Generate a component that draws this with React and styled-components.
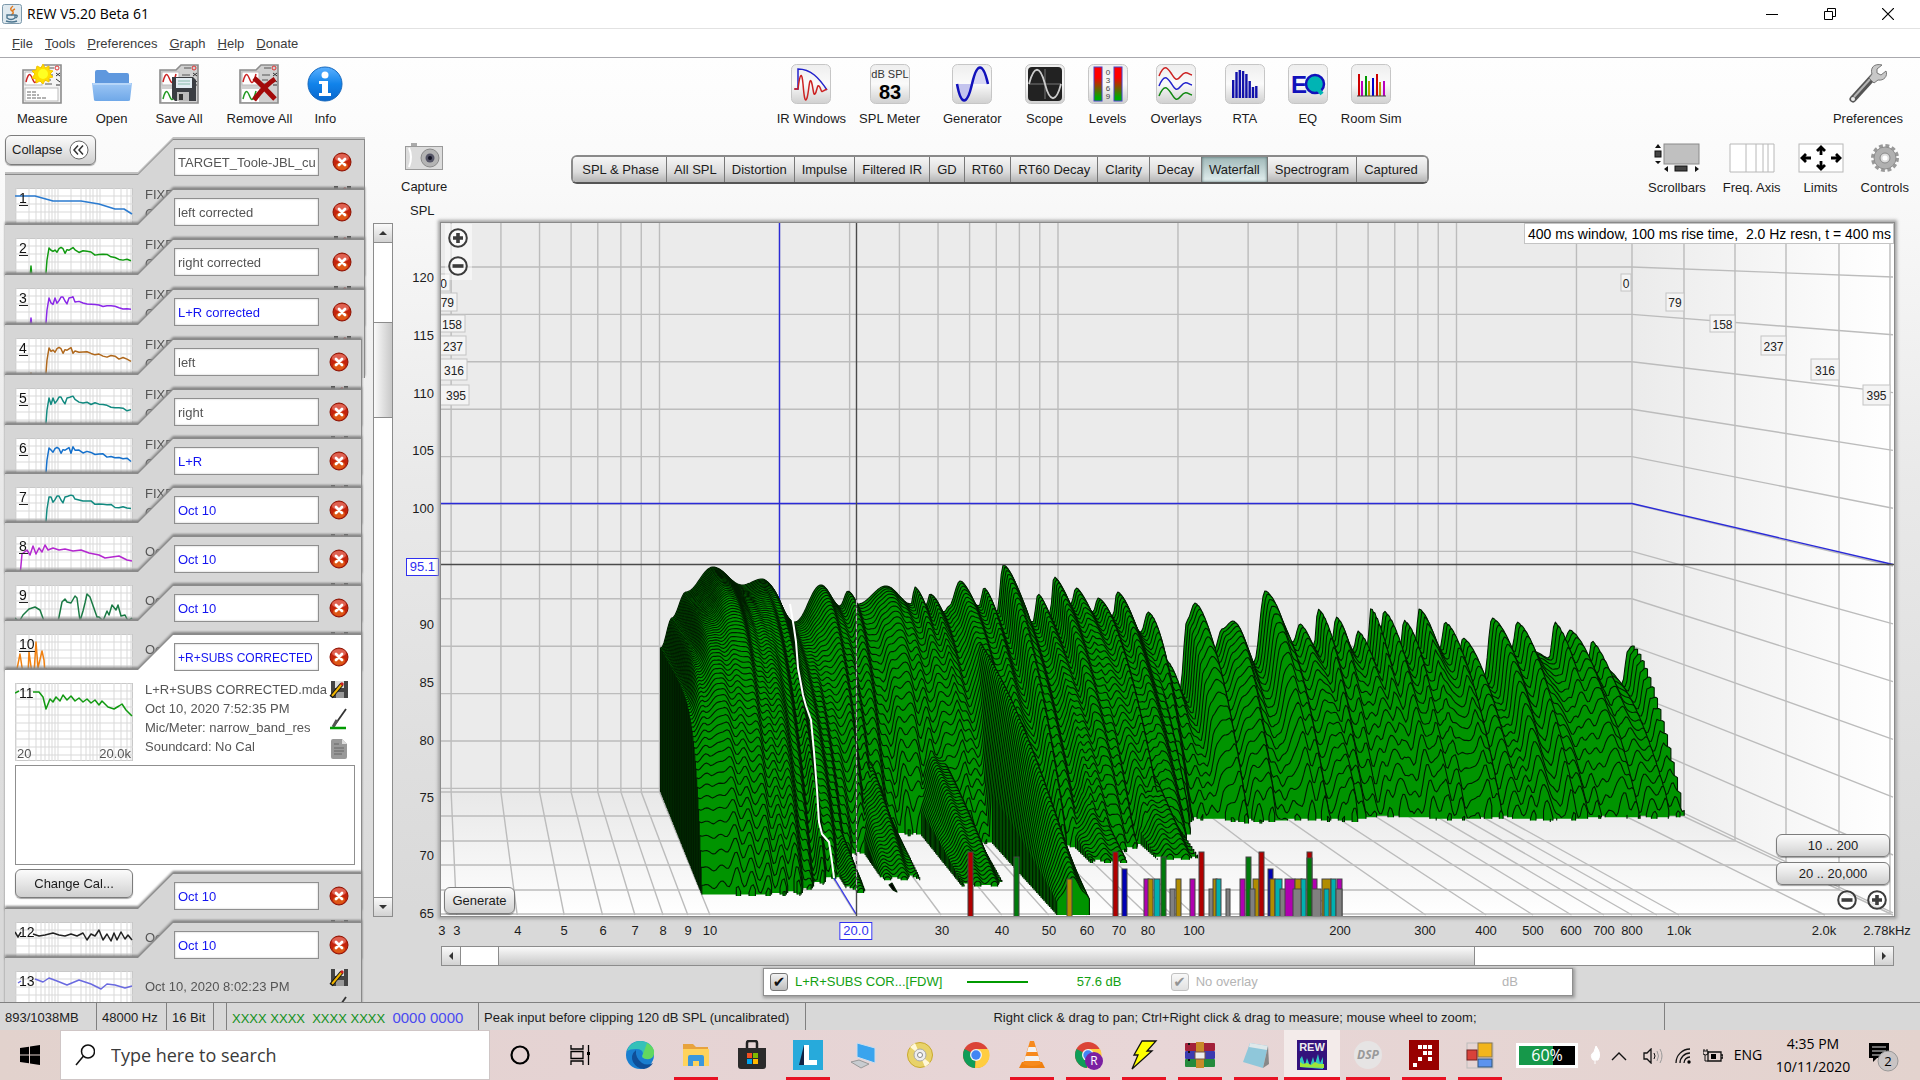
import React from "react";
import styled, { createGlobalStyle, css } from "styled-components";

const Global = createGlobalStyle`
  *, *::before, *::after { box-sizing: border-box; }
  html, body, #root { height: 100%; }
  body {
    margin: 0;
    overflow: hidden;
    font: 13px/18px "Liberation Sans", Arial, sans-serif;
    color: #1c1c1c;
    background: #d8d8d8;
  }
  button, input, textarea { font: inherit; color: inherit; margin: 0; }
  ul { list-style: none; margin: 0; padding: 0; }
  svg { display: block; flex: none; }
`;

/* ---------- waterfall geometry ---------- */

const BACK_FLOOR = 792;
const FRONT_FLOOR = 915;
const backX = (u) => 660.5 + 398.5 * u;
const frontX = (u) => 710 + 484.5 * u;
const mix = (a, b, t) => a + (b - a) * t;

function sample(table, u, col) {
  if (u <= table[0][0]) return table[0][col];
  for (let i = 1; i < table.length; i++) {
    if (u <= table[i][0]) {
      const a = table[i - 1];
      const b = table[i];
      return mix(a[col], b[col], (u - a[0]) / (b[0] - a[0]));
    }
  }
  return table[table.length - 1][col];
}

function smooth(table, u, col) {
  if (u <= table[0][0]) return table[0][col];
  for (let i = 1; i < table.length; i++) {
    if (u <= table[i][0]) {
      const a = table[i - 1];
      const b = table[i];
      const t = (u - a[0]) / (b[0] - a[0]);
      return mix(a[col], b[col], (1 - Math.cos(Math.PI * t)) / 2);
    }
  }
  return table[table.length - 1][col];
}

// crest of the first slice: x, y
const CREST = [
  [661, 648], [672, 618], [686, 592], [713, 567], [742, 585], [762, 579], [795, 622], [821, 585], [840, 606],
  [848, 591], [858, 604], [886, 586], [911, 604], [915, 587], [926, 606], [930, 594], [944, 612], [949, 606],
  [960, 581], [979, 606], [984, 588], [997, 612], [1003, 565], [1033, 622], [1038, 594], [1050, 614],
  [1054, 577], [1071, 604], [1076, 588], [1093, 612], [1098, 598], [1113, 616], [1117, 592], [1141, 632],
  [1148, 612], [1166, 660], [1180, 690], [1187, 620], [1195, 603], [1214, 650], [1222, 629], [1233, 621],
  [1254, 662], [1265, 591], [1293, 642], [1300, 624], [1314, 646], [1318, 609], [1332, 640], [1336, 617],
  [1353, 650], [1358, 631], [1367, 650], [1371, 608], [1380, 634], [1384, 611], [1400, 648], [1404, 620],
  [1415, 644], [1419, 609], [1440, 648], [1445, 622], [1459, 652], [1463, 638], [1484, 678], [1492, 618],
  [1512, 648], [1517, 622], [1535, 652], [1549, 658], [1555, 622], [1564, 640], [1570, 630], [1588, 660],
  [1592, 641], [1606, 668], [1622, 684], [1628, 650], [1632, 646],
].map(([x, y]) => [(x - 660.5) / 398.5, BACK_FLOOR - y]);

// depth at which each frequency drops below the floor, and the bend of its decay
const DECAY = [
  [0, 0.84, 7], [0.03, 0.84, 5.5], [0.1, 0.85, 3.4], [0.216, 0.83, 2.6], [0.26, 0.75, 2.1], [0.3, 0.71, 1.9],
  [0.35, 0.58, 1.8], [0.4, 0.5, 1.8], [0.46, 0.42, 1.8], [0.52, 0.35, 1.8], [0.58, 0.36, 1.9], [0.64, 0.38, 1.8],
  [0.7, 0.42, 1.7], [0.73, 0.5, 1.5], [0.76, 0.52, 1.4], [0.83, 0.5, 1.4], [0.88, 0.46, 1.4], [0.94, 0.5, 1.4],
  [1.0, 0.48, 1.4], [1.05, 0.45, 1.5], [1.1, 0.44, 1.5], [1.14, 0.45, 1.4], [1.19, 0.36, 1.5], [1.23, 0.25, 1.6],
  [1.3, 0.22, 1.7], [1.36, 0.26, 1.6], [1.5, 0.23, 1.6], [1.62, 0.25, 1.5], [1.7, 0.2, 1.6], [1.85, 0.23, 1.6],
  [2.0, 0.22, 1.6], [2.1, 0.24, 1.5], [2.25, 0.21, 1.6], [2.36, 0.22, 1.5], [2.444, 0.2, 1.5],
];

// slowly decaying room modes: centre, half width, height, depth reached
const MODAL = [
  [0.335, 0.022, 56, 0.83],
  [0.445, 0.042, 92, 0.72],
  [0.615, 0.05, 88, 0.78],
  [0.75, 0.036, 172, 1.12],
  [0.94, 0.045, 96, 0.58],
  [1.1, 0.05, 100, 0.56],
];

const ripple = (u, s) =>
  Math.sin(u * 58 + s * 4) * 0.55 + Math.sin(u * 93 + 1.3) * 0.35 + Math.sin(u * 151 + 4) * 0.25 + Math.sin(u * 263) * 0.15;

function heightAt(u, s) {
  const h0 = smooth(CREST, u, 1);
  const grow = u > 0.28 ? 1 : u / 0.28;
  const end = sample(DECAY, u, 1) * (1 + 0.03 * grow * Math.sin(u * 190));
  const r = s / end;
  let h = 0;
  if (r < 1) {
    const left = 1 - Math.pow(r, sample(DECAY, u, 2));
    h = h0 * left + ripple(u, s) * 17 * grow * r * (left > 0.1 ? 1 : left * 10);
  }
  for (const [c, w, a, e] of MODAL) {
    const d = Math.abs(u - c) / w;
    if (d < 1 && s < e) {
      h = Math.max(h, a * (1 - Math.pow(s / e, 1.6)) * (1 - d * d * 0.75) + Math.sin(u * 170) * 3);
    }
  }
  return h;
}

function buildSlices() {
  const slices = [];
  const N = 78;
  for (let i = 0; i <= N; i++) {
    const s = i / N;
    const floor = mix(BACK_FLOOR, FRONT_FLOOR, s);
    let d = "";
    let open = false;
    let lastX = 0;
    for (let u = 0; u <= 2.444; u += 0.0045) {
      const x = mix(backX(u), frontX(u), s);
      const h = heightAt(u, s);
      if (h > 1) {
        const y = (floor - h * (1 + 0.22 * s)).toFixed(1);
        if (!open) d += `M${x.toFixed(1)} ${floor.toFixed(1)}`;
        d += `L${x.toFixed(1)} ${y}`;
        open = true;
        lastX = x;
      } else if (open) {
        d += `L${lastX.toFixed(1)} ${floor.toFixed(1)}`;
        open = false;
      }
    }
    if (open) d += `L${lastX.toFixed(1)} ${floor.toFixed(1)}`;
    if (d) slices.push(d);
  }
  return slices;
}
const SLICES = buildSlices();

const FREQS = [3, 4, 5, 6, 7, 8, 9, 10, 20, 30, 40, 50, 60, 70, 80, 90, 100, 200, 300, 400, 500, 600, 700, 800, 900, 1000, 2000];
const LEVEL_ROWS = Array.from({ length: 12 }, (_, i) => [267 + i * 47.4, 277 + i * 57.8]);
const DEPTHS = [
  ["0", 1621, 1631, 274, 291, 450],
  ["79", 1666, 1684, 293, 311, 457],
  ["158", 1710, 1735, 315, 332, 465],
  ["237", 1761, 1786, 336, 355, 466],
  ["316", 1811, 1839, 359, 380, 467],
  ["395", 1863, 1890, 385, 405, 469],
];
const C = { r: "#b00000", g: "#007a0c", b: "#0000b4", y: "#b08c00", m: "#b000b0", c: "#00b0b0", k: "#808080" };
const MODES = [
  [968, 5, 852, "r"], [1014, 5, 857, "g"], [1067, 5, 879, "y"], [1113, 5, 852, "r"], [1122, 5, 869, "b"],
  [1144, 5, 879, "m"], [1148, 5, 879, "y"], [1154, 6, 879, "c"], [1161, 5, 857, "g"], [1170, 5, 889, "k"],
  [1176, 5, 879, "y"], [1190, 5, 879, "m"], [1199, 5, 852, "r"], [1209, 5, 889, "k"], [1213, 4, 879, "y"],
  [1216, 5, 879, "c"], [1226, 4, 889, "k"], [1240, 5, 879, "m"], [1246, 5, 857, "g"], [1253, 6, 879, "y"],
  [1250, 5, 889, "k"], [1259, 5, 852, "r"], [1268, 5, 869, "b"], [1270, 5, 879, "y"], [1275, 7, 879, "c"],
  [1280, 6, 889, "k"], [1285, 10, 879, "m"], [1295, 7, 879, "y"], [1301, 5, 879, "c"], [1293, 8, 889, "k"],
  [1312, 5, 879, "m"], [1307, 5, 852, "r"], [1307, 5, 858, "g"], [1312, 9, 889, "k"], [1322, 9, 879, "y"],
  [1324, 5, 889, "c"], [1331, 5, 879, "c"], [1337, 5, 879, "m"], [1336, 6, 889, "k"],
];

const WaterfallPlot = () => (
  <PlotDrawing viewBox="441 223 1453 693" preserveAspectRatio="none" role="img" aria-label="Waterfall graph">
    <defs>
      <linearGradient id="side" x1="0" x2="1">
        <stop offset="0" stopColor="#ebebeb" />
        <stop offset="1" stopColor="#ffffff" />
      </linearGradient>
      <linearGradient id="floor" x1="0" x2="0" y1="0" y2="1">
        <stop offset="0" stopColor="#e8e8e8" />
        <stop offset="1" stopColor="#ffffff" />
      </linearGradient>
    </defs>
    <rect x="441" y="223" width="1191" height="569" fill="#ebebeb" />
    <path d="M1632 223H1894V916L1632 792Z" fill="url(#side)" />
    <path d="M441 792H1632L1894 916H441Z" fill="url(#floor)" />
    <g stroke="#bcbcbc" fill="none" strokeWidth="1.4">
      {FREQS.map((f) => {
        const u = Math.log10(f / 10);
        return <path key={f} d={`M${backX(u) - 1} 223V792L${frontX(u)} 915`} />;
      })}
      {LEVEL_ROWS.map(([a, b]) => (
        <path key={a} d={`M441 ${a}H1632L1893 ${b}`} />
      ))}
      <path d="M441 792H1632V223M1632 792L1893 915" />
      {[[1684, 816], [1735, 841], [1786, 865], [1839, 890], [1890, 914]].map(([x, y]) => (
        <path key={x} d={`M441 ${y}H${x}V223`} />
      ))}
    </g>
    <path d="M441 503.500H1632L1893 564.500M779.500 223V700" stroke="#2a2ad8" strokeWidth="1.4" fill="none" />
    <g fill="#009400" stroke="#001c00" strokeWidth="1.1" strokeLinejoin="round">
      {SLICES.map((d, i) => (
        <path key={i} d={d} />
      ))}
      <path d="M889 885l3-2 5 9-4-2z" fill="#000" />
    </g>
    <path
      d="M790 604L794 628L796 642L798 668L803 695L806 706L811 720L814 752L817 790L819 822L822 834L829 842L832 862L834 878"
      stroke="#fff" strokeWidth="2" fill="none" strokeLinejoin="round"
    />
    <path d="M834 878L856 914" stroke="#3838e8" strokeWidth="1.4" />
    <g stroke="#444" strokeWidth="1">
      {MODES.map(([x, w, y, c], i) => (
        <rect key={i} x={x} y={y} width={w} height={917 - y} fill={C[c]} />
      ))}
    </g>
    <path d="M856.500 223V916M441 564.500H1894" stroke="#4a4a4a" strokeWidth="1.4" />
    <path d="M856.500 600V890" stroke="#b9a0b9" strokeWidth="1" strokeDasharray="5 3" />
    {DEPTHS.map(([t, x1, x2, y1, y2, lx]) => (
      <g key={t} fontSize="12" textAnchor="middle" fill="#222">
        <rect x={x1} y={y1} width={x2 - x1} height={y2 - y1} fill="#f4f4f4" stroke="#c4c4c4" />
        <text x={(x1 + x2) / 2} y={(y1 + y2) / 2 + 5}>{t}</text>
        <rect x="430" y={y1} width={lx - 430} height={y2 - y1} fill="#f4f4f4" stroke="#c4c4c4" />
        <text x={lx - 3} y={(y1 + y2) / 2 + 5} textAnchor="end">{t}</text>
      </g>
    ))}
  </PlotDrawing>
);

/* ---------- window frame ---------- */

const Window = styled.div`
  height: 100vh;
  display: flex;
  flex-direction: column;
`;
const TitleBar = styled.header`
  height: 29px;
  display: flex;
  align-items: center;
  padding: 0 3px 0 2px;
  background: #fff;
  border-bottom: 1px solid #e2e2e2;
`;
const Title = styled.h1`
  flex: 1;
  margin: 0 0 0 5px;
  font: 400 14px/28px "Open Sans", "Noto Sans", sans-serif;
  color: #000;
`;
const WinButton = styled.button`
  width: 58px;
  height: 28px;
  border: 0;
  padding: 0;
  background: none;
  display: grid;
  place-items: center;
`;
const MenuBar = styled.nav`
  height: 29px;
  display: flex;
  align-items: center;
  gap: 12px;
  padding: 1px 0 0 12px;
  background: #fff;
  border-bottom: 1px solid #a9a9ae;
`;
const MenuLink = styled.a`
  color: #3c3c3c;
  text-decoration: none;
`;
const Body = styled.div`
  flex: 1;
  min-height: 0;
  display: flex;
  flex-direction: column;
  background: linear-gradient(#fefefe, #fafafa 12%, #e9e9e9 45%, #d9d9d9 90%);
`;

/* ---------- tool rows ---------- */

const Toolbar = styled.div`
  height: 77px;
  flex: none;
  display: flex;
  justify-content: space-between;
  padding: 6px 17px 0;
`;
const ToolGroup = styled.div`
  display: flex;
  align-items: flex-start;
  gap: ${(p) => p.$gap}px;
`;
const Tool = styled.button`
  min-width: 40px;
  border: 0;
  padding: 0;
  background: none;
  display: flex;
  flex-direction: column;
  align-items: center;
  gap: 6px;
  white-space: nowrap;
`;

const Tile = ({ children, dark }) => (
  <svg width="40" height="40" viewBox="0 0 40 40">
    <defs>
      <linearGradient id="tile" x1="0" x2="0" y1="0" y2="1">
        <stop offset="0" stopColor="#eee" />
        <stop offset=".5" stopColor="#fafafa" />
        <stop offset="1" stopColor="#d0d0d0" />
      </linearGradient>
    </defs>
    <rect x=".5" y=".5" width="39" height="39" rx="5" fill="url(#tile)" stroke="#c6c6c6" />
    {dark && <rect x="3" y="3" width="34" height="34" rx="4" fill="#222" />}
    {children}
  </svg>
);

const CardIcon = ({ children, dim }) => (
  <svg width="40" height="40" viewBox="0 0 40 40">
    <path d="M1 6H17L22 1H39V39H1Z" fill={dim ? "#d0d0d0" : "#f4f4f4"} stroke="#8c8c8c" strokeWidth="1.600" />
    <rect x="3" y="8" width="17" height="13" fill="#fff" stroke="#bbb" />
    <path d="M4 18c3-12 5-7 7-2s4 2 6-6" stroke="#c22" strokeWidth="1.500" fill="none" />
    <path d="M23 11h8M23 16h6M23 20h7M25 4h7" stroke="#555" />
    <circle cx="35" cy="4" r="2" fill="none" stroke="#d33" />
    <path d="M34 9l4 3M34 12l4-3M34 15l4 3M34 21h4" stroke="#333" />
    {dim ? (
      <g>
        <rect x="3" y="25" width="17" height="13" fill="#fff" />
        <path d="M4 35c3-12 5-7 7-2s4 2 6-6" stroke="#292" strokeWidth="1.500" fill="none" />
      </g>
    ) : (
      <g>
        <rect x="3" y="24" width="33" height="13" fill="#fff" stroke="#bbb" />
        <path d="M5 28h10M5 31h12M5 34h20" stroke="#666" strokeDasharray="4 1" />
      </g>
    )}
    {children}
  </svg>
);

const ICONS = {
  measure: (
    <CardIcon>
      <path d="M21 0l2 4 4-2 0 4 4 1-3 3 3 3-4 1 0 4-4-2-2 4-3-3-4 2 0-4-4-1 3-4-3-3 4-1 1-4 4 2z" fill="#fd0" stroke="#f5c400" />
      <circle cx="21" cy="10" r="5" fill="#ff2" />
    </CardIcon>
  ),
  open: (
    <svg width="40" height="40" viewBox="0 0 40 40">
      <defs>
        <linearGradient id="fold" x1="0" x2="0" y1="0" y2="1">
          <stop offset="0" stopColor="#9cc6f5" />
          <stop offset="1" stopColor="#6fa8e8" />
        </linearGradient>
      </defs>
      <path d="M3 34V8q0-2 2-2h9l3 3h18q2 0 2 2v23z" fill="#5f98de" />
      <path d="M0 19h40l-2 17q0 1-2 1H4q-2 0-2-1z" fill="url(#fold)" />
      <path d="M1 20h38" stroke="#d3e7fd" />
    </svg>
  ),
  save: (
    <CardIcon dim>
      <path d="M13 13h21l3 3v21H16l-3-3z" fill="#3a3d42" />
      <rect x="17" y="14" width="16" height="10" fill="#e3edf3" />
      <path d="M19 17h12M19 20h12" stroke="#8ba" />
      <rect x="18" y="28" width="12" height="9" fill="#bbb" />
      <rect x="20" y="30" width="4" height="6" fill="#333" />
    </CardIcon>
  ),
  remove: (
    <CardIcon dim>
      <path d="M15 14C22 20 29 28 36 35M36 15C28 20 21 28 15 36" stroke="#a30a0a" strokeWidth="5" fill="none" />
    </CardIcon>
  ),
  info: (
    <svg width="40" height="40" viewBox="0 0 40 40">
      <defs>
        <linearGradient id="inf" x1="0" x2="0" y1="0" y2="1">
          <stop offset="0" stopColor="#5ab0ff" />
          <stop offset=".5" stopColor="#1183ea" />
          <stop offset="1" stopColor="#0a66cc" />
        </linearGradient>
      </defs>
      <circle cx="20" cy="20" r="17" fill="url(#inf)" stroke="#1668bd" />
      <circle cx="20" cy="11" r="3.500" fill="#fff" />
      <path d="M14 17h9v12h3v3H14v-3h3v-9h-3z" fill="#fff" />
    </svg>
  ),
  ir: (
    <Tile>
      <path d="M4 25H7V5C20 5 28 14 36 26" fill="none" stroke="#22c" strokeWidth="1.500" />
      <path d="M3 25h4C9 8 11 8 12 20S14 40 16 34S18 14 20 17S22 32 24 30S26 20 28 22S30 29 32 27L36 25" fill="none" stroke="#c22" strokeWidth="1.500" />
    </Tile>
  ),
  spl: (
    <Tile>
      <text x="20" y="14" fontSize="11" textAnchor="middle" fill="#333">dB SPL</text>
      <text x="20" y="35" fontSize="20" fontWeight="700" textAnchor="middle">83</text>
    </Tile>
  ),
  gen: (
    <Tile>
      <path d="M5 20C9 42 15 42 20 20V20Z" fill="#c4c4ee" />
      <path d="M20 20C25-4 31-4 36 20Z" fill="#d8d8f4" />
      <path d="M5 20C9 42 15 42 20 20S31-2 36 20" fill="none" stroke="#11b" strokeWidth="2.500" />
    </Tile>
  ),
  scope: (
    <Tile dark>
      <path d="M20 5V35M4 20H36" stroke="#777" />
      <path d="M4 20C9 1 15 1 20 20S31 39 36 20" fill="none" stroke="#ccc" strokeWidth="1.800" />
    </Tile>
  ),
  levels: (
    <Tile>
      <defs>
        <linearGradient id="lev" x1="0" x2="0" y1="0" y2="1">
          <stop offset=".3" stopColor="#f00" />
          <stop offset=".9" stopColor="#0a0" />
        </linearGradient>
      </defs>
      <rect x="6" y="3" width="8" height="34" fill="url(#lev)" stroke="#44c" />
      <rect x="26" y="3" width="8" height="34" fill="url(#lev)" stroke="#44c" />
      {["0", "3", "6", "9"].map((n, i) => (
        <text key={n} x="20" y={11 + i * 8} fontSize="8" textAnchor="middle" fill="#444">{n}</text>
      ))}
    </Tile>
  ),
  overlays: (
    <Tile>
      {["#c22", "#22c", "#181"].map((c, i) => (
        <path key={c} d={`M3 ${12 + i * 10}C8 ${0 + i * 10} 11 ${3 + i * 10} 15 ${9 + i * 10}S20 ${18 + i * 10} 25 ${12 + i * 10}S32 ${10 + i * 10} 36 ${11 + i * 10}`} fill="none" stroke={c} strokeWidth="1.500" />
      ))}
    </Tile>
  ),
  rta: (
    <Tile>
      {[18, 26, 28, 27, 24, 17, 11, 12].map((h, i) => (
        <rect key={i} x={7 + i * 3.3} y={34 - h} width="2.400" height={h} fill="#11a" />
      ))}
    </Tile>
  ),
  eq: (
    <Tile>
      <text x="3" y="29" fontSize="24" fontWeight="700" fill="#11b">E</text>
      <circle cx="27" cy="20" r="9" fill="#00b4b4" stroke="#11b" strokeWidth="2.500" />
      <path d="M29 24l5 6" stroke="#00b4b4" strokeWidth="4" />
    </Tile>
  ),
  room: (
    <Tile>
      {[[7, 22, "#c00"], [10, 15, "#b0b"], [14, 20, "#090"], [17, 15, "#b90"], [21, 18, "#00c"], [25, 22, "#c00"], [28, 14, "#b90"], [32, 15, "#b0b"]].map(([x, h, c]) => (
        <rect key={x} x={x} y={32 - h} width="2" height={h} fill={c} />
      ))}
      <path d="M6 32H35" stroke="#444" />
    </Tile>
  ),
  prefs: (
    <svg width="40" height="40" viewBox="0 0 40 40">
      <path d="M5 35L25 13" stroke="#555" strokeWidth="7" strokeLinecap="round" />
      <path d="M6 33L24 13" stroke="#b4b4b4" strokeWidth="2" />
      <circle cx="5" cy="35" r="2" fill="#eee" />
      <path d="M34 1C26-1 22 4 24 10L21 14L26 19L30 16C36 17 40 12 38 7L33 11L29 9L29 5Z" fill="#c8c8c8" stroke="#777" />
    </svg>
  ),
};

const tool = (id, label) => (
  <Tool key={id} type="button">
    {ICONS[id]}
    {label}
  </Tool>
);

/* ---------- measurement list ---------- */

const Workspace = styled.main`
  flex: 1;
  min-height: 0;
  display: flex;
`;
const SidePanel = styled.aside`
  width: 393px;
  flex: none;
  display: flex;
  justify-content: space-between;
  padding-left: 5px;
  overflow: hidden;
`;
const ListColumn = styled.div`
  width: 364px;
`;
const glossy = css`
  border: 1px solid #7c7c7c;
  border-radius: 6px;
  background: linear-gradient(#fbfbfb, #e6e6e6 50%, #cfcfcf);
  box-shadow: 0 1px 1px rgba(0, 0, 0, 0.35);
`;
const CollapseButton = styled.button`
  ${glossy}
  display: flex;
  align-items: center;
  justify-content: space-between;
  width: 91px;
  height: 30px;
  padding: 0 6px;
`;
const MeasurementList = styled.ul`
  margin-top: -25px;
  pointer-events: none;
`;
const Card = styled.li`
  position: relative;
  width: ${(p) => (p.$wide ? 360 : 357)}px;
  height: ${(p) => p.$height}px;
  margin-bottom: -38px;
  filter: drop-shadow(0 -1px 0 #8a8a8a) drop-shadow(0 -2px ${(p) => (p.$first ? 0 : 1)}px ${(p) => (p.$first ? "#c0c0c0" : "#858585")});
`;
const CardShape = styled.div`
  height: 100%;
  padding: 8px 8px 0 10px;
  pointer-events: auto;
  background: ${(p) => (p.$selected ? "#ffffff" : "#d6d6d6")};
  border-right: 1px solid #8a8a8a;
  clip-path: polygon(0 35px, 133px 35px, 168px 0, 100% 0, 100% 100%, 0 100%);
`;
const CardHead = styled.div`
  display: flex;
  align-items: center;
  justify-content: space-between;
  padding-left: 159px;
  padding-right: 4px;
  height: 28px;
`;
const NameField = styled.input`
  width: 145px;
  height: 28px;
  padding: 1px 3px 0;
  border: 1px solid #8f8f8f;
  background: #fff;
  outline: 0;
  font-size: ${(p) => (p.$long ? 12 : 13)}px;
  color: ${(p) => (p.$blue ? "#1414f0" : "#555")};
  box-shadow: inset 0 0 2px #bbb;
`;
const RoundButton = styled.button`
  width: 20px;
  height: 20px;
  padding: 0;
  border: 0;
  background: none;
  display: grid;
  place-items: center;
`;
const CardBody = styled.div`
  display: grid;
  grid-template-columns: 118px 1fr 20px;
  column-gap: 12px;
  padding: 12px 4px 0 0;
`;
const Details = styled.div`
  height: 78px;
  min-width: 0;
  margin-top: -3px;
  padding-top: ${(p) => (p.$single ? 9 : 0)}px;
  line-height: 19px;
  color: #555;
  white-space: nowrap;
`;
const SideIcons = styled.div`
  display: flex;
  flex-direction: column;
  gap: 9px;
  margin-top: -3px;
`;
const Notes = styled.textarea`
  display: block;
  width: 340px;
  height: 100px;
  margin: 4px 0;
  resize: none;
  border: 1px solid #8f8f8f;
  background: #fff;
`;
const CalButton = styled.button`
  ${glossy}
  width: 118px;
  height: 29px;
`;

const DeleteIcon = () => (
  <svg width="20" height="20" viewBox="0 0 20 20">
    <circle cx="10" cy="10" r="9" fill="#c4240c" stroke="#8d1505" />
    <ellipse cx="10" cy="14" rx="6" ry="4" fill="#ee7a1c" opacity=".6" />
    <ellipse cx="10" cy="6" rx="7" ry="4" fill="#f08a80" opacity=".6" />
    <path d="M7 7l6 6M13 7l-6 6" stroke="#fff" strokeWidth="2.800" strokeLinecap="round" />
  </svg>
);
const DiskIcon = () => (
  <svg width="20" height="19" viewBox="0 0 20 19">
    <path d="M2 1h17v17H4l-2-2z" fill="#444" />
    <path d="M6 1h9v7H6z" fill="#ddd" />
    <path d="M7 12h8v6H7z" fill="#999" />
    <path d="M2 17L13 4" stroke="#111" strokeWidth="4" />
    <path d="M3 16L13 4" stroke="#f0b400" strokeWidth="2" />
    <path d="M12 5l2-2" stroke="#c22" strokeWidth="3" />
  </svg>
);
const PenIcon = () => (
  <svg width="20" height="22" viewBox="0 0 20 22">
    <path d="M5 18L17 1" stroke="#333" strokeWidth="1.800" />
    <path d="M4 19l4-7" stroke="#555" strokeWidth="3" />
    <path d="M1 20H17" stroke="#009a00" strokeWidth="2.500" />
  </svg>
);
const DocIcon = () => (
  <svg width="20" height="20" viewBox="0 0 20 20">
    <path d="M2 2q0-2 2-2h9l5 5v13q0 2-2 2H4q-2 0-2-2z" fill="#999" />
    <path d="M5 5h5M5 9h10M5 12h10M5 15h8" stroke="#666" />
    <path d="M13 0l5 5h-5z" fill="#ddd" />
  </svg>
);

const LOG_LINES = [1, 14, 21, 26, 30, 34, 37, 40, 43, 56, 66, 71, 75, 78, 82, 85, 99, 106, 112, 116];
const hash = (n) => {
  const v = Math.sin(n * 12.9898) * 43758.5453;
  return v - Math.floor(v);
};
const rolloff = (seed, spike) => {
  const pts = [[30, 48], [32, 22], [34, 10]];
  for (let x = 36; x < 60; x += 2) pts.push([x, 8 + hash(x + seed) * 9]);
  for (let x = 60; x <= 117; x += 4) pts.push([x, 11 + (x - 60) * 0.17 + hash(x * seed) * 3]);
  const line = "M" + pts.map((p) => p.join(" ")).join("L");
  return spike ? `M15 40l1-${spike} 1 ${spike}${line}` : line;
};
const CURVES = {
  1: "M0 8H20L38 13H66L84 16L100 21H109L117 26",
  2: rolloff(2, 12),
  3: rolloff(3, 10),
  4: rolloff(4, 5),
  5: rolloff(5),
  6: rolloff(6),
  7: rolloff(7),
  8: "M5 40L7 18L12 14L15 19L18 10L21 18L24 12L27 16L30 9L33 14L38 12L44 14L50 13L58 15L66 14L74 17L84 19L90 22L104 20L112 24L117 25",
  9: "M0 33L4 37L8 30L14 24L20 22L25 25L29 36M43 37L47 17L50 14L52 17L56 18L60 11L62 13L65 36L68 26L70 18L72 9L75 12L82 32L84 32L88 36L92 26L94 30L97 20L101 25L103 20L106 31L110 30L113 36L117 33",
  10: "M1 40L5 20L8 40M13 40L14 18L17 40M19 40L21 8L23 34L27 17L29 26L30 40M31 34L34 40",
  11: "M0 10L4 8M18 9L24 9L28 14L31 26L35 16L38 19L41 14L45 18L48 12L52 17L56 13L60 18L64 15L68 19L72 16L76 20L80 17L84 22L87 18L93 24L99 26L104 23L107 21L111 27L117 33",
  12: "M0 10L3 15L6 10M18 12L24 14L30 13L38 11L44 13L50 14L56 12L62 14L68 11L72 18L76 12L80 14L84 8L88 18L92 12L96 19L99 11L102 18L106 10L110 17L113 13L117 18",
  13: "M3 12L6 10M20 8L28 11L34 7L42 10L52 14L64 9L76 13L86 18L92 13L100 14L110 17L117 15",
};
const Thumb = ({ n, color, scale, underline }) => (
  <svg width="118" height="78" viewBox="0 0 118 78">
    <rect x=".5" y=".5" width="117" height="77" fill="#fff" stroke="#c8c8c8" />
    <g stroke="#d9d9d9">
      {LOG_LINES.map((x) => (
        <path key={x} d={`M${x} 0V78`} />
      ))}
      {[8, 16, 24, 32, 40, 48, 56, 64, 72].map((y) => (
        <path key={y} d={`M0 ${y}H118`} />
      ))}
    </g>
    <path d={CURVES[n]} fill="none" stroke={color} strokeWidth="1.500" strokeLinejoin="round" />
    <text x="4" y="15" fontSize="14" fill="#111">{n}</text>
    {underline && <path d={`M4 17.500H${n > 9 ? 20 : 13}`} stroke="#222" />}
    {scale && (
      <g fontSize="13" fill="#555">
        <text x="2" y="75">20</text>
        <text x="116" y="75" textAnchor="end">20.0k</text>
      </g>
    )}
  </svg>
);

const FIXED = ["FIXED", "Oct 10"];
const ITEMS = [
  { n: 1, name: "TARGET_Toole-JBL_curve", color: "#2b7bd0", height: 88, lines: FIXED, wide: true },
  { n: 2, name: "left corrected", color: "#109a10", height: 88, lines: FIXED, wide: true },
  { n: 3, name: "right corrected", color: "#8a28e8", height: 88, lines: FIXED, wide: true },
  { n: 4, name: "L+R corrected", blue: true, color: "#b0681c", height: 88, lines: FIXED, wide: true },
  { n: 5, name: "left", color: "#128a80", height: 88, lines: FIXED },
  { n: 6, name: "right", color: "#1470cc", height: 87, lines: FIXED },
  { n: 7, name: "L+R", blue: true, color: "#128a80", height: 87, lines: FIXED },
  { n: 8, name: "Oct 10", blue: true, color: "#b428d0", height: 87, lines: ["Oct 10"] },
  { n: 9, name: "Oct 10", blue: true, color: "#1a7a44", height: 87, lines: ["Oct 10"] },
  { n: 10, name: "Oct 10", blue: true, color: "#f08010", height: 87, lines: ["Oct 10"] },
  {
    n: 11, name: "+R+SUBS CORRECTED", blue: true, long: true, color: "#109a10", height: 277, selected: true,
    lines: ["L+R+SUBS CORRECTED.mda", "Oct 10, 2020 7:52:35 PM", "Mic/Meter: narrow_band_res", "Soundcard: No Cal"],
  },
  { n: 12, name: "Oct 10", blue: true, color: "#222", height: 87, lines: ["Oct 10"] },
  { n: 13, name: "Oct 10", blue: true, color: "#6a6ae0", height: 120, lines: ["Oct 10, 2020 8:02:23 PM"] },
];

const Measurement = ({ item }) => (
  <Card $wide={item.wide} $height={item.height} $first={item.n === 1}>
    <CardShape $selected={item.selected}>
      <CardHead>
        <NameField aria-label={`Measurement ${item.n} name`} defaultValue={item.name} $blue={item.blue} $long={item.long} />
        <RoundButton type="button" aria-label={`Remove measurement ${item.n}`}>
          <DeleteIcon />
        </RoundButton>
      </CardHead>
      <CardBody>
        <Thumb n={item.n} color={item.color} scale={item.selected} underline={item.n < 11} />
        <Details $single={item.lines.length === 1}>
          {item.lines.map((l) => (
            <div key={l}>{l}</div>
          ))}
        </Details>
        <SideIcons>
          <DiskIcon />
          <PenIcon />
          <DocIcon />
        </SideIcons>
      </CardBody>
      {item.selected && (
        <>
          <Notes aria-label="Notes" />
          <CalButton type="button">Change Cal...</CalButton>
        </>
      )}
    </CardShape>
  </Card>
);

/* ---------- scroll bars ---------- */

const VScroll = styled.div`
  width: 20px;
  margin: 88px 0 85px;
  display: flex;
  flex-direction: column;
  border: 1px solid #8c8c8c;
  background: #fff;
`;
const HScroll = styled.div`
  height: 20px;
  display: flex;
  border: 1px solid #8c8c8c;
  background: #fff;
`;
const Arrow = styled.button`
  flex: none;
  width: 18px;
  height: 18px;
  padding: 0;
  border: 0;
  display: grid;
  place-items: center;
  background: linear-gradient(#fafafa, #d2d2d2);
  box-shadow: 0 0 0 1px #8c8c8c;
`;
const VThumb = styled.div`
  height: 96px;
  margin-top: 80px;
  border: solid #8c8c8c;
  border-width: 1px 0;
  background: linear-gradient(90deg, #fafafa, #c8c8c8);
`;
const HThumb = styled.div`
  flex: 975;
  border: solid #8c8c8c;
  border-width: 0 1px;
  background: linear-gradient(#fafafa, #c8c8c8);
`;
const Space = styled.div`
  flex: ${(p) => p.$grow || 1};
`;
const Tri = ({ d }) => (
  <svg width="10" height="10" viewBox="0 0 10 10">
    <path d={d} fill="#333" />
  </svg>
);

/* ---------- graph pane ---------- */

const GraphPane = styled.section`
  flex: 1;
  min-width: 0;
  display: flex;
  flex-direction: column;
  padding-right: 11px;
`;
const GraphTools = styled.div`
  height: 67px;
  flex: none;
  display: flex;
  align-items: flex-start;
  padding-left: 8px;
  padding-top: 8px;
`;
const TabStrip = styled.div`
  display: flex;
  height: 29px;
  margin: 12px auto 0 124px;
  border: 2px solid #8a8a8a;
  border-bottom-color: #555;
  border-radius: 6px;
  overflow: hidden;
`;
const Tab = styled.button`
  border: 0;
  border-right: 1px solid #777;
  padding: 1px 7px 0;
  background: ${(p) => (p.$on ? "linear-gradient(#9fb8b8, #e4f0f0)" : "linear-gradient(#f6f6f6, #dcdcdc 60%, #b4b4b4)")};
  box-shadow: ${(p) => (p.$on ? "inset 0 0 3px #4f6a6a" : "none")};
  white-space: nowrap;
  &:first-child { padding-left: 9px; }
  &:last-child { border-right: 0; padding-right: 9px; }
`;
const UnitLabel = styled.div`
  height: 21px;
  flex: none;
  padding-left: 17px;
`;
const GraphGrid = styled.div`
  flex: 1;
  min-height: 0;
  display: grid;
  grid-template-columns: 48px 1fr;
  grid-template-rows: 1fr 30px 20px;
  padding-right: 15px;
`;
const LevelAxis = styled.div`
  display: flex;
  flex-direction: column;
  justify-content: space-between;
  align-items: flex-end;
  padding: 46px 7px 0 0;
  margin-bottom: -7px;
`;
const CursorTag = styled.span`
  padding: 0 3px;
  line-height: 16px;
  border: 1px solid #3030f0;
  background: #fff;
  color: #3030f0;
`;
const LevelCursor = styled(CursorTag)`
  margin-right: -5px;
`;
const Plot = styled.div`
  position: relative;
  min-width: 0;
  box-shadow: 0 0 0 1px #8a8a8a, 0 0 3px 3px #a4a4a4;
  background: #ebebeb;
`;
const PlotDrawing = styled.svg`
  position: absolute;
  inset: 0;
  width: 100%;
  height: 100%;
`;
const Caption = styled.div`
  position: absolute;
  top: 0;
  right: 0;
  padding: 1px 2px 0 3px;
  border: 1px solid #c4c4c4;
  background: #fff;
  color: #000;
  font-size: 14px;
  white-space: pre;
`;
const ZoomY = styled.div`
  position: absolute;
  top: 1px;
  left: 4px;
  width: 27px;
  padding: 4px 3px;
  display: grid;
  gap: 8px;
  background: rgba(255, 255, 255, 0.5);
`;
const GenerateButton = styled.button`
  ${glossy}
  position: absolute;
  left: 3px;
  bottom: 2px;
  width: 71px;
  height: 27px;
  padding: 0;
`;
const RangeStack = styled.div`
  position: absolute;
  right: 4px;
  bottom: 6px;
  width: 114px;
  display: flex;
  flex-direction: column;
  gap: 5px;
`;
const RangeButton = styled.button`
  ${glossy}
  height: 23px;
  padding: 0;
  line-height: 18px;
`;
const ZoomX = styled.div`
  align-self: flex-end;
  display: flex;
  gap: 10px;
  padding-right: 3px;
`;
const FreqAxis = styled.div`
  grid-column: 2;
  position: relative;
`;
const Tick = styled.span`
  position: absolute;
  top: 6px;
  transform: translateX(-50%);
  white-space: nowrap;
`;
const CursorTick = styled(CursorTag)`
  position: absolute;
  top: 6px;
  transform: translateX(-50%);
`;
const Legend = styled.div`
  flex: none;
  width: 808px;
  height: 26px;
  margin: 3px 0 7px 371px;
  display: flex;
  align-items: center;
  padding: 0 54px 0 6px;
  background: #fff;
  box-shadow: 0 0 0 1px #8f8f8f, 1px 1px 3px 2px #9a9a9a;
`;
const Trace = styled.label`
  display: flex;
  align-items: center;
  gap: 7px;
  color: ${(p) => p.$color};
`;
const TraceToggle = styled.input`
  appearance: none;
  width: 18px;
  height: 18px;
  border: 1px solid #777;
  border-radius: 3px;
  background: linear-gradient(#f2f2f2, #bdbdbd);
  display: grid;
  place-items: center;
  opacity: ${(p) => (p.disabled ? 0.45 : 1)};
  &:checked::before {
    content: "✔";
    font: 15px/16px "DejaVu Sans", sans-serif;
    color: #111;
  }
`;
const Reading = styled.output`
  color: ${(p) => p.$color};
  width: ${(p) => p.$width}px;
`;

const Zoom = ({ plus }) => (
  <svg width="20" height="20" viewBox="0 0 20 20">
    <circle cx="10" cy="10" r="8.800" fill="#fff" fillOpacity=".6" stroke="#3c3c3c" strokeWidth="2" />
    <path d={plus ? "M5 10H15M10 5V15" : "M4.500 10H15.500"} stroke="#3c3c3c" strokeWidth="3.600" />
  </svg>
);

const TABS = ["SPL & Phase", "All SPL", "Distortion", "Impulse", "Filtered IR", "GD", "RT60", "RT60 Decay", "Clarity", "Decay", "Waterfall", "Spectrogram", "Captured"];
const LEVELS = [120, 115, 110, 105, 100, 95, 90, 85, 80, 75, 70, 65];
const at = (x) => `${((x - 441) / 1453) * 100}%`;
const TICKS = [
  ["3", 442], ["3", 457], ["4", 518], ["5", 564], ["6", 603], ["7", 635], ["8", 663], ["9", 688], ["10", 710],
  ["30", 942], ["40", 1002], ["50", 1049], ["60", 1087], ["70", 1119], ["80", 1148], ["100", 1194], ["200", 1340],
  ["300", 1425], ["400", 1486], ["500", 1533], ["600", 1571], ["700", 1604], ["800", 1632], ["1.0k", 1679],
  ["2.0k", 1824], ["2.78kHz", 1887],
];

/* ---------- status bar and task bar ---------- */

const StatusBar = styled.footer`
  height: 28px;
  flex: none;
  display: flex;
  border-top: 1px solid #808080;
  background: #d8d8d8;
  line-height: 30px;
  white-space: pre;
`;
const Cell = styled.div`
  flex: ${(p) => (p.$grow ? 1 : "none")};
  width: ${(p) => p.$width}px;
  padding-left: ${(p) => (p.$grow ? 0 : 5)}px;
  height: 27px;
  text-align: ${(p) => (p.$grow ? "center" : "left")};
  border-right: ${(p) => (p.$end ? 0 : "1px solid #808080")};
`;
const Bits = styled.span`
  color: ${(p) => p.$color};
  font-size: ${(p) => p.$size}px;
`;
const TaskBar = styled.nav`
  height: 50px;
  flex: none;
  display: flex;
  align-items: stretch;
  background: linear-gradient(90deg, #e2d2cd, #e5d3d3 30%, #e8d6d7 60%, #e3d3ce);
  font-family: "Open Sans", "Noto Sans", sans-serif;
  color: #000;
`;
const TaskButton = styled.button`
  position: relative;
  width: ${(p) => p.$width || 56}px;
  flex: none;
  border: 0;
  padding: 0;
  display: grid;
  place-items: center;
  background: ${(p) => (p.$active ? "#f3ebea" : "none")};
  &::after {
    content: "";
    position: absolute;
    left: ${(p) => (p.$active ? 0 : 6)}px;
    right: ${(p) => (p.$active ? 0 : 6)}px;
    bottom: 0;
    height: ${(p) => (p.$open ? 3 : 0)}px;
    background: #e81123;
  }
`;
const SearchBox = styled.label`
  width: 430px;
  flex: none;
  display: flex;
  align-items: center;
  gap: 14px;
  padding-left: 14px;
  background: #fff;
  border: 1px solid #cfc6c6;
`;
const SearchInput = styled.input`
  flex: 1;
  min-width: 0;
  border: 0;
  outline: 0;
  background: none;
  font-size: 18px;
  &::placeholder { color: #3a3a3a; opacity: 1; }
`;
const Tray = styled.div`
  margin-left: auto;
  display: flex;
  align-items: center;
  padding-right: 12px;
`;
const Charge = styled.div`
  width: 62px;
  height: 25px;
  margin-right: 12px;
  border: 3px solid #fff;
  background: linear-gradient(90deg, #16984a 60%, #000 60%);
  color: #fff;
  text-align: center;
  font-size: 16px;
  line-height: 19px;
`;
const TrayIcon = styled.button`
  width: ${(p) => p.$width}px;
  height: 50px;
  border: 0;
  padding: 2px 0 0;
  background: none;
  display: grid;
  place-items: center;
`;
const Lang = styled.span`
  width: 40px;
  text-align: center;
  font-size: 14px;
`;
const Clock = styled.time`
  width: 90px;
  text-align: center;
  font-size: 14px;
  line-height: 23px;
`;

const chrome = (
  <g>
    <circle cx="15" cy="15" r="13" fill="#db4437" />
    <path d="M15 15L3.500 9A13 13 0 0 0 14 28z" fill="#0f9d58" />
    <path d="M15 15L14 28A13 13 0 0 0 27 9H15z" fill="#ffcd40" />
    <circle cx="15" cy="15" r="6" fill="#f1f1f1" />
    <circle cx="15" cy="15" r="4.700" fill="#4285f4" />
  </g>
);
const APPS = [
  ["Edge", false, (
    <g>
      <circle cx="15" cy="15" r="14" fill="#1a7fd0" />
      <path d="M2 11C6-3 27-2 29 12q0 7-8 7-6-1-3-5 0-5-7-5-6 0-9 2z" fill="#35c1b8" />
      <path d="M22 3q8 4 7 11-1 6-8 5-5-1-3-5z" fill="#62d860" />
      <path d="M11 10q-6 5-3 12 4 7 11 7 6-1 9-6-6 3-11 0-7-5-6-13z" fill="#0f4f98" />
    </g>
  )],
  ["File Explorer", true, (
    <g>
      <path d="M2 4h10l3 3h12v19H2z" fill="#e8a33d" />
      <path d="M2 9h26v17H2z" fill="#ffd35c" />
      <path d="M7 26V17q0-2 2-2h12q2 0 2 2v9h-5v-5h-6v5z" fill="#3b97dc" />
    </g>
  )],
  ["Store", false, (
    <g>
      <path d="M10 9V3q0-2 2-2h6q2 0 2 2v6" fill="none" stroke="#222" strokeWidth="2.500" />
      <path d="M1 8h28v18q0 3-3 3H4q-3 0-3-3z" fill="#2b2b2b" />
      <path d="M10 13h5v5h-5z" fill="#f25022" />
      <path d="M16 13h5v5h-5z" fill="#7fba00" />
      <path d="M10 19h5v5h-5z" fill="#00a4ef" />
      <path d="M16 19h5v5h-5z" fill="#ffb900" />
    </g>
  )],
  ["Lenovo", true, (
    <g>
      <rect width="30" height="30" fill="#27aadb" />
      <path d="M11 5L6 25h5z" fill="#124" />
      <path d="M11 5h5v15h8v5H11z" fill="#fff" />
    </g>
  )],
  ["Remote", false, (
    <g>
      <path d="M8 3l18 5v15L8 17z" fill="#3aa4ee" stroke="#cde" />
      <path d="M2 22l8-2 10 4-8 4z" fill="#c8ccd0" stroke="#999" />
    </g>
  )],
  ["Disc", false, (
    <g>
      <circle cx="15" cy="15" r="12.500" fill="#e8d26a" stroke="#c9a92c" />
      <path d="M15 15L5 7l5-4zM15 15l10 8-5 4z" fill="#fff8d8" />
      <circle cx="15" cy="15" r="6" fill="#eee" stroke="#aaa" />
      <circle cx="15" cy="15" r="2.500" fill="#fff" stroke="#888" />
    </g>
  )],
  ["Chrome", false, chrome],
  ["VLC", true, (
    <g>
      <path d="M5 22h20l3 6H2z" fill="#f08010" />
      <path d="M13 1h4l7 23q-9 4-18 0z" fill="#f78a1d" />
      <path d="M11.500 7h7l1.500 5h-10zM8.500 16h13l1.500 5H7z" fill="#f2f2f2" />
    </g>
  )],
  ["Chrome profile", true, (
    <g>
      {chrome}
      <circle cx="21" cy="21" r="9" fill="#7b1fa2" />
      <text x="21" y="25" fontSize="12" textAnchor="middle" fill="#fff">R</text>
    </g>
  )],
  ["Bolt", true, <path d="M13 1h14l-9 10h5L3 29l6-14H5z" fill="#ff0" stroke="#111" strokeWidth="1.300" />],
  ["WinRAR", true, (
    <g>
      <rect y="3" width="30" height="8" rx="1" fill="#a3213a" />
      <rect y="11" width="30" height="8" rx="1" fill="#3b3bb0" />
      <rect y="19" width="30" height="8" rx="1" fill="#258a3c" />
      <path d="M4 3v24" stroke="#111" strokeWidth="2" strokeDasharray="2 6" />
      <rect x="11" y="2" width="8" height="26" fill="#c88a28" />
      <rect x="10" y="12" width="10" height="7" fill="#eee" stroke="#754" />
    </g>
  )],
  ["Notepad", true, (
    <g>
      <path d="M9 3l18 3-5 22-20-6z" fill="#8fc7da" />
      <path d="M9 3l18 3-1 4L8 7z" fill="#dfe8ea" />
      <path d="M27 6l1 18-6 4z" fill="#888" />
    </g>
  )],
  ["REW", true, (
    <g>
      <rect width="30" height="30" fill="#33127c" />
      <text x="15" y="11" fontSize="11" fontWeight="700" textAnchor="middle" fill="#eee" fontFamily="Liberation Sans">REW</text>
      <path d="M3 27V19l2-3 3 9 2-7 3 8 3-9 2 7 3-10 2 9 3-6v12z" fill="#2fc6c0" />
      <path d="M3 27v-5l3 2 4-1 4 2 4-3 4 2 5 0v4z" fill="#9ee83a" />
    </g>
  )],
  ["DSP", true, (
    <g>
      <circle cx="15" cy="15" r="14" fill="#e6e4e4" />
      <text x="15" y="19" fontSize="12" textAnchor="middle" fill="#999" fontWeight="700" fontStyle="italic">DSP</text>
    </g>
  )],
  ["Dirac", true, (
    <g>
      <rect width="30" height="30" fill="#980000" />
      {[[9, 5], [14, 5], [19, 5], [14, 11], [19, 11], [9, 17], [19, 17], [4, 23]].map(([x, y]) => (
        <rect key={`${x}-${y}`} x={x} y={y} width="4" height="4" fill="#fff" />
      ))}
    </g>
  )],
  ["Panels", true, (
    <g>
      <rect x="2" y="3" width="26" height="25" fill="none" stroke="#bbb" />
      <rect x="13" y="3" width="14" height="14" fill="#f2b51c" stroke="#875" />
      <rect x="2" y="10" width="10" height="10" fill="#d8423a" stroke="#722" />
      <rect x="13" y="19" width="14" height="8" fill="#5c93ee" stroke="#357" />
    </g>
  )],
];

export default function App() {
  return (
    <Window>
      <Global />
      <TitleBar>
        <svg width="20" height="20" viewBox="0 0 20 20">
          <rect x=".5" y=".5" width="19" height="19" rx="2" fill="#dfe9ef" stroke="#7d99ab" />
          <path d="M11 2q-4 3-1 5t-1 4M13 5q-3 1-2 3" stroke="#e07a20" fill="none" strokeWidth="1.500" />
          <path d="M5 11h8v3q-4 3-8 0zM13 11q4 0 1 3M4 17q6 2 11 0" stroke="#4d7690" fill="none" strokeWidth="1.400" />
        </svg>
        <Title>REW V5.20 Beta 61</Title>
        <WinButton type="button" aria-label="Minimize">
          <svg width="12" height="12"><path d="M0 6.500H12" stroke="#000" /></svg>
        </WinButton>
        <WinButton type="button" aria-label="Restore">
          <svg width="12" height="12"><path d="M.5 3.500h8v8h-8zM3.500 3V.5h8v8H9" stroke="#000" fill="none" /></svg>
        </WinButton>
        <WinButton type="button" aria-label="Close">
          <svg width="12" height="12"><path d="M0 0L12 12M12 0L0 12" stroke="#000" strokeWidth="1.200" /></svg>
        </WinButton>
      </TitleBar>
      <MenuBar>
        {["File", "Tools", "Preferences", "Graph", "Help", "Donate"].map((m) => (
          <MenuLink key={m} href="#">
            <u>{m[0]}</u>
            {m.slice(1)}
          </MenuLink>
        ))}
      </MenuBar>

      <Body>
        <Toolbar>
          <ToolGroup $gap={24}>
            {[["measure", "Measure"], ["open", "Open"], ["save", "Save All"]].map((t) => tool(...t))}
            <ToolGroup $gap={13}>{[["remove", "Remove All"], ["info", "Info"]].map((t) => tool(...t))}</ToolGroup>
          </ToolGroup>
          <ToolGroup $gap={23}>
            <ToolGroup $gap={13}>{[["ir", "IR Windows"], ["spl", "SPL Meter"]].map((t) => tool(...t))}</ToolGroup>
            {[["gen", "Generator"], ["scope", "Scope"], ["levels", "Levels"], ["overlays", "Overlays"], ["rta", "RTA"]].map((t) => tool(...t))}
            <ToolGroup $gap={13}>{[["eq", "EQ"], ["room", "Room Sim"]].map((t) => tool(...t))}</ToolGroup>
          </ToolGroup>
          <ToolGroup $gap={0}>{tool("prefs", "Preferences")}</ToolGroup>
        </Toolbar>

        <Workspace>
          <SidePanel>
            <ListColumn>
              <CollapseButton type="button">
                Collapse
                <svg width="20" height="20" viewBox="0 0 20 20">
                  <circle cx="10" cy="10" r="9" fill="#fff" stroke="#666" />
                  <path d="M9 5.500L5 10l4 4.500M14 5.500L10 10l4 4.500" fill="none" stroke="#333" strokeWidth="1.500" />
                </svg>
              </CollapseButton>
              <MeasurementList>
                {ITEMS.map((item) => (
                  <Measurement key={item.n} item={item} />
                ))}
              </MeasurementList>
            </ListColumn>
            <VScroll>
              <Arrow type="button" aria-label="Scroll up"><Tri d="M1 7L5 3L9 7Z" /></Arrow>
              <VThumb />
              <Space />
              <Arrow type="button" aria-label="Scroll down"><Tri d="M1 3L5 7L9 3Z" /></Arrow>
            </VScroll>
          </SidePanel>

          <GraphPane>
            <GraphTools>
              <Tool type="button">
                <svg width="38" height="29" viewBox="0 0 38 29">
                  <path d="M6 0h6v4H6z" fill="#aaa" />
                  <rect x=".5" y="3.500" width="37" height="23" fill="#dcdcdc" stroke="#9a9a9a" />
                  <path d="M4 5q4 9 0 19" fill="none" stroke="#fff" strokeWidth="2" />
                  <circle cx="25" cy="15" r="9" fill="#b4b4b4" stroke="#8a8a8a" />
                  <circle cx="25" cy="15" r="4.500" fill="#556" />
                  <circle cx="25" cy="15" r="2" fill="#112" />
                </svg>
                Capture
              </Tool>
              <TabStrip role="tablist">
                {TABS.map((t) => (
                  <Tab key={t} type="button" role="tab" aria-selected={t === "Waterfall"} $on={t === "Waterfall"}>{t}</Tab>
                ))}
              </TabStrip>
              <ToolGroup $gap={17}>
                <Tool type="button">
                  <svg width="46" height="30" viewBox="0 0 46 30">
                    <rect x="10" y="1" width="35" height="20" fill="#c0c0c0" stroke="#8a8a8a" />
                    <path d="M1 5l3-4 3 4zM1 18l3 3 3-3zM14 23v6l-4-3zM41 23v6l4-3z" fill="#111" />
                    <rect x="1" y="8" width="6" height="6" fill="#444" stroke="#111" />
                    <rect x="21" y="23" width="12" height="5" fill="#444" stroke="#111" />
                  </svg>
                  Scrollbars
                </Tool>
                <Tool type="button">
                  <svg width="46" height="30" viewBox="0 0 46 30">
                    <path d="M1 1h44v28H1zM17 1v28M27 1v28M34 1v28M39 1v28" fill="#fff" stroke="#b8b8b8" />
                  </svg>
                  Freq. Axis
                </Tool>
                <Tool type="button">
                  <svg width="46" height="30" viewBox="0 0 46 30">
                    <rect x="1" y="1" width="44" height="28" fill="#fff" stroke="#b8b8b8" />
                    <path d="M13 15H5M8 11l-4 4 4 4M33 15h8M38 11l4 4-4 4M23 12V5M19 8l4-4 4 4M23 18v7M19 22l4 4 4-4" fill="none" stroke="#000" strokeWidth="2.800" />
                  </svg>
                  Limits
                </Tool>
                <Tool type="button">
                  <svg width="30" height="30" viewBox="0 0 30 30">
                    <circle cx="15" cy="15" r="12.500" fill="none" stroke="#999" strokeWidth="3" strokeDasharray="3.900 2.650" />
                    <circle cx="15" cy="15" r="11" fill="#b0b0b0" stroke="#8c8c8c" />
                    <circle cx="15" cy="15" r="5" fill="#ddd" stroke="#888" />
                    <circle cx="15" cy="15" r="2.500" fill="#fff" />
                  </svg>
                  Controls
                </Tool>
              </ToolGroup>
            </GraphTools>
            <UnitLabel>SPL</UnitLabel>
            <GraphGrid>
              <LevelAxis>
                {LEVELS.map((l) => (l === 95 ? <LevelCursor key={l}>95.1</LevelCursor> : <span key={l}>{l}</span>))}
              </LevelAxis>
              <Plot>
                <WaterfallPlot />
                <Caption>{"400 ms window, 100 ms rise time,  2.0 Hz resn, t = 400 ms"}</Caption>
                <ZoomY>
                  <RoundButton type="button" aria-label="Zoom in level"><Zoom plus /></RoundButton>
                  <RoundButton type="button" aria-label="Zoom out level"><Zoom /></RoundButton>
                </ZoomY>
                <GenerateButton type="button">Generate</GenerateButton>
                <RangeStack>
                  <RangeButton type="button">10 .. 200</RangeButton>
                  <RangeButton type="button">20 .. 20,000</RangeButton>
                  <ZoomX>
                    <RoundButton type="button" aria-label="Zoom out frequency"><Zoom /></RoundButton>
                    <RoundButton type="button" aria-label="Zoom in frequency"><Zoom plus /></RoundButton>
                  </ZoomX>
                </RangeStack>
              </Plot>
              <FreqAxis>
                {TICKS.map(([t, x]) => (
                  <Tick key={x} style={{ left: at(x) }}>{t}</Tick>
                ))}
                <CursorTick style={{ left: at(856) }}>20.0</CursorTick>
              </FreqAxis>
              <div />
              <HScroll>
                <Arrow type="button" aria-label="Scroll left"><Tri d="M7 1L3 5L7 9Z" /></Arrow>
                <Space $grow={38} />
                <HThumb />
                <Space $grow={400} />
                <Arrow type="button" aria-label="Scroll right"><Tri d="M3 1L7 5L3 9Z" /></Arrow>
              </HScroll>
            </GraphGrid>
            <Legend>
              <Trace $color="#12a012">
                <TraceToggle type="checkbox" defaultChecked />
                L+R+SUBS COR...[FDW]
              </Trace>
              <Space />
              <svg width="61" height="4"><path d="M0 2H61" stroke="#009a00" strokeWidth="2" /></svg>
              <Space $grow={2} />
              <Reading $color="#12a012" $width={94}>57.6 dB</Reading>
              <Trace $color="#b4b4b4">
                <TraceToggle type="checkbox" defaultChecked disabled />
                No overlay
              </Trace>
              <Space $grow={10} />
              <Reading $color="#b4b4b4">dB</Reading>
            </Legend>
          </GraphPane>
        </Workspace>
      </Body>

      <StatusBar>
        <Cell $width={97}>893/1038MB</Cell>
        <Cell $width={70}>48000 Hz</Cell>
        <Cell $width={47}>16 Bit</Cell>
        <Cell $width={13} />
        <Cell $width={252}>
          <Bits $color="#12901a" $size={13}>{"XXXX XXXX  XXXX XXXX  "}</Bits>
          <Bits $color="#4a4af0" $size={15}>0000 0000</Bits>
        </Cell>
        <Cell $width={327}>Peak input before clipping 120 dB SPL (uncalibrated)</Cell>
        <Cell $grow>Right click &amp; drag to pan; Ctrl+Right click &amp; drag to measure; mouse wheel to zoom;</Cell>
        <Cell $width={255} $end />
      </StatusBar>

      <TaskBar>
        <TaskButton $width={60} type="button" aria-label="Start">
          <svg width="20" height="20" viewBox="0 0 20 20"><path d="M0 3l9-1.300V9.500H0zM10 1.500L20 0v9.500H10zM0 10.500h9v7.800L0 17zM10 10.500h10V20l-10-1.500z" fill="#000" /></svg>
        </TaskButton>
        <SearchBox>
          <svg width="20" height="22" viewBox="0 0 20 22"><circle cx="13" cy="7.500" r="6.500" fill="none" stroke="#111" strokeWidth="1.500" /><path d="M8.500 12L1 21" stroke="#111" strokeWidth="1.500" /></svg>
          <SearchInput type="text" aria-label="Search" placeholder="Type here to search" />
        </SearchBox>
        <TaskButton $width={60} type="button" aria-label="Cortana">
          <svg width="20" height="20" viewBox="0 0 20 20"><circle cx="10" cy="10" r="8.500" fill="none" stroke="#000" strokeWidth="2.200" /></svg>
        </TaskButton>
        <TaskButton $width={62} type="button" aria-label="Task view">
          <svg width="22" height="20" viewBox="0 0 22 20"><path d="M1 0v4h12V0M1 20v-4h12v4M1 6.500h12v7H1zM18.500 0v20" fill="none" stroke="#000" strokeWidth="1.300" /><path d="M17 7h3v3h-3z" /></svg>
        </TaskButton>
        {APPS.map(([name, open, art]) => (
          <TaskButton key={name} type="button" aria-label={name} $open={open} $active={name === "REW"}>
            <svg width="30" height="30" viewBox="0 0 30 30">{art}</svg>
          </TaskButton>
        ))}
        <Tray>
          <Charge>60%</Charge>
          <svg width="10" height="18" viewBox="0 0 10 18"><path d="M6 0q6 8 2 14H3q-4-5 1-8zM5 14v4" fill="#fff" stroke="#fff" /></svg>
          <TrayIcon $width={38} type="button" aria-label="Hidden icons">
            <svg width="16" height="10"><path d="M1 9L8 2L15 9" fill="none" stroke="#111" strokeWidth="1.400" /></svg>
          </TrayIcon>
          <TrayIcon $width={30} type="button" aria-label="Volume">
            <svg width="20" height="16" viewBox="0 0 20 16"><path d="M1 5h3l4-4v14l-4-4H1z" fill="none" stroke="#111" strokeWidth="1.300" /><path d="M11 5q2 3 0 6" stroke="#111" fill="none" /><path d="M14 3q3 5 0 10M17 1q4 7 0 14" stroke="#999" fill="none" /></svg>
          </TrayIcon>
          <TrayIcon $width={30} type="button" aria-label="Network">
            <svg width="16" height="16" viewBox="0 0 16 16"><path d="M1 15A14 14 0 0 1 15 1M5 15A10 10 0 0 1 15 5M9 15A6 6 0 0 1 15 9" fill="none" stroke="#111" strokeWidth="1.300" /><circle cx="14" cy="14" r="1.700" /></svg>
          </TrayIcon>
          <TrayIcon $width={30} type="button" aria-label="Power">
            <svg width="20" height="14" viewBox="0 0 20 14"><path d="M5 3h13v9H5zM18 6h2v3h-2" fill="none" stroke="#111" strokeWidth="1.300" /><path d="M8 5h5v5H8z" /><path d="M0 2h5v3q-2 2-5 0zM1 0v2M4 0v2M2 6v6h3" stroke="#111" fill="none" /></svg>
          </TrayIcon>
          <Lang>ENG</Lang>
          <Clock>4:35 PM<br />10/11/2020</Clock>
          <TrayIcon $width={50} type="button" aria-label="Notifications, 2 new">
            <svg width="32" height="32" viewBox="0 0 32 32">
              <path d="M2 3h20v15H10l-4 4v-4H2z" fill="#000" />
              <path d="M5 7h14M5 11h14M5 15h8" stroke="#ddd" />
              <circle cx="21" cy="21" r="10" fill="#c9c4c4" stroke="#999" />
              <text x="21" y="26" fontSize="13" textAnchor="middle">2</text>
            </svg>
          </TrayIcon>
        </Tray>
      </TaskBar>
    </Window>
  );
}
